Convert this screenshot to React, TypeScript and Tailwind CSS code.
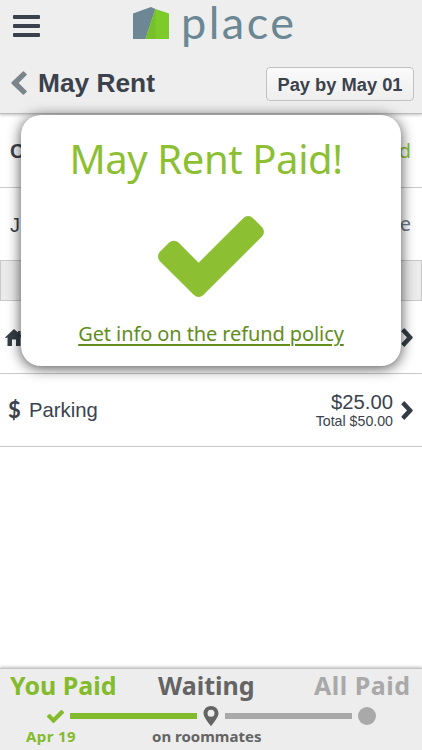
import type { ReactNode } from "react";
import clsx from "clsx";

function CheckMark({ className }: { className?: string }) {
  return (
    <svg viewBox="121 334 1550 1188" preserveAspectRatio="none" fill="currentColor" className={className}>
      <path d="M1671 566q0 40-28 68l-724 724-136 136q-28 28-68 28t-68-28l-136-136-362-362q-28-28-28-68t28-68l136-136q28-28 68-28t68 28l294 295 656-657q28-28 68-28t68 28l136 136q28 28 28 68z" />
    </svg>
  );
}

function ChevronRight() {
  return (
    <svg viewBox="0 0 12 19" className="h-[19px] w-3 shrink-0 text-[#343d46]">
      <path
        d="M3.800.6 11.500 8.800q.5.7 0 1.400L3.800 18.400q-.5.5-1 0L.6 16.300q-.5-.5 0-1L6 9.500.6 3.700q-.5-.5 0-1L2.800.6q.5-.5 1 0z"
        fill="currentColor"
      />
    </svg>
  );
}

function Row({ className, children }: { className?: string; children: ReactNode }) {
  return (
    <div
      className={clsx(
        "flex items-center justify-between border-b border-[#c9c9c9] pr-[9px] pl-[10px] text-xl",
        className ?? "h-[73px]",
      )}
    >
      {children}
    </div>
  );
}

function Header() {
  return (
    <header className="relative h-[114px] shrink-0 border-b border-[#bdbdbd] bg-[#eeeeee] shadow-[0_1px_3px_rgba(0,0,0,0.25)]">
      <div className="flex h-[52px] items-start pl-[13px]">
        <div className="mt-[15px] flex w-[27px] flex-col gap-[5px]">
          <span className="h-1 rounded-[1px] bg-[#39424c]" />
          <span className="h-1 rounded-[1px] bg-[#39424c]" />
          <span className="h-1 rounded-[1px] bg-[#39424c]" />
        </div>
        <div className="ml-[93px] flex items-start">
          <svg viewBox="0 0 36 32" className="mt-[7px] h-8 w-9">
            <path d="M0 6.500 18 0l4.500 2L12.500 32H0z" fill="#6d8795" />
            <path d="M22.500 2 36 6.500V32H12.500z" fill="#7ccb28" />
            <path d="M22.500 2V32h-10z" fill="#76c02c" />
          </svg>
          <span className="ml-3 font-['Lato'] text-[45px] leading-[45px] tracking-[2.5px] text-[#6b8794]">
            place
          </span>
        </div>
      </div>
      <div className="flex h-[62px] items-center pr-2 pl-[11px]">
        <svg viewBox="0 0 16 24" className="h-6 w-4">
          <path
            d="M15.600 3 13 .5q-.6-.6-1.200 0L.6 11.300q-.7.7 0 1.400l11.200 10.800q.6.6 1.200 0l2.600-2.500q.5-.5 0-1L7.700 12l7.900-8q.5-.5 0-1z"
            fill="#7b838b"
          />
        </svg>
        <h1 className="ml-[11px] text-[26.3px] leading-8 font-bold">May Rent</h1>
        <button className="mt-px ml-auto h-[34px] w-[148px] rounded-[4px] border border-[#c2c2c2] bg-gradient-to-b from-[#fafafa] to-[#eeeeee] pt-[2px] text-[18.3px] font-bold whitespace-nowrap">
          Pay by May 01
        </button>
      </div>
    </header>
  );
}

function PaidDialog() {
  return (
    <div className="absolute top-[115px] left-[21px] flex h-[251px] w-[380px] flex-col items-center rounded-[20px] bg-white font-['Noto_Sans'] shadow-[0_2px_14px_rgba(0,0,0,0.7)]">
      <h2 className="mt-[17px] mr-[10px] text-[40px] leading-[54px] tracking-[-0.4px] whitespace-nowrap text-[#8dbf32]">
        May Rent Paid!
      </h2>
      <CheckMark className="mt-[30px] h-[81px] w-[106px] text-[#8dbf32]" />
      <a className="mt-[23px] text-[20px] leading-[28px] tracking-[-0.1px] whitespace-nowrap text-[#638c1e] underline decoration-[1.5px] underline-offset-3">
        Get info on the refund policy
      </a>
    </div>
  );
}

function Progress() {
  return (
    <footer className="relative mt-auto h-[82px] shrink-0 border-t border-[#c4c4c4] bg-[#ededed] font-['Noto_Sans'] font-bold shadow-[0_-1px_3px_rgba(0,0,0,0.25)]">
      <div className="flex h-[37px] items-center pb-[3px] pl-[10px] text-[25px] whitespace-nowrap">
        <span className="w-[148px] text-[#84bb2c]">You Paid</span>
        <span className="w-[156px] text-[#646464]">Waiting</span>
        <span className="tracking-[0.5px] text-[#a9a9a9]">All Paid</span>
      </div>
      <div className="flex h-[20px] items-center pl-[47px]">
        <CheckMark className="h-[13px] w-[17px] text-[#84bb2c]" />
        <span className="ml-[6px] h-[6px] w-[127px] bg-[#84bb2c]" />
        <svg viewBox="0 0 16 22" className="ml-[6px] h-[22px] w-4">
          <path
            d="M8 1C3.800 1 .5 4.200.5 8.200c0 4 4.700 9.100 7.500 13 2.800-3.900 7.500-9 7.500-13C15.500 4.200 12.200 1 8 1zm0 3.700a3.500 3.500 0 1 1 0 7 3.500 3.500 0 0 1 0-7z"
            fill="#646464"
          />
        </svg>
        <span className="ml-[6px] h-[6px] w-[127px] bg-[#a9a9a9]" />
        <span className="ml-[6px] size-[18px] rounded-full bg-[#a9a9a9]" />
      </div>
      <div className="flex h-[20px] items-center pl-[26px] text-[15px] whitespace-nowrap">
        <span className="w-[126px] tracking-[0.4px] text-[#84bb2c]">Apr 19</span>
        <span className="text-[#646464]">on roommates</span>
      </div>
    </footer>
  );
}

export default function App() {
  return (
    <div className="relative flex h-screen flex-col overflow-hidden bg-white font-['Liberation_Sans',sans-serif] text-[#3b424b]">
      <Header />
      <main>
        <Row className="h-[74px]">
          <span className="font-bold">C</span>
          <span className="mr-[2px] font-['Noto_Sans'] text-[#8dbf32]">d</span>
        </Row>
        <Row className="h-[73px]">
          <span className="pt-0.5">J</span>
          <span className="mr-[2px] font-['Noto_Sans'] text-[#737a82]">e</span>
        </Row>
        <div className="-mt-px h-[41px] border border-[#c9c9c9] bg-[#ebebeb]" />
        <Row>
          <svg viewBox="0 0 18 17" className="-ml-[5px] h-[17px] w-[18px]">
            <path d="M9 0l4 3.500V2h2.500v3.700L18 8.500l-1 .8-1.500-1V17H11v-6.500H7V17H2.500V8.300L1 9.300 0 8.500z" fill="#343d46" />
          </svg>
          <ChevronRight />
        </Row>
        <Row>
          <div className="flex items-center">
            <span className="-ml-[2px] w-[19px] font-['Lato'] text-[22px] leading-6 font-bold">$</span>
            <span className="ml-[2px] text-[20.3px]">Parking</span>
          </div>
          <div className="ml-auto flex items-center gap-2">
            <div className="text-right">
              <div className="text-[20.3px] leading-[22px]">$25.00</div>
              <div className="text-[14.2px] leading-4">Total $50.00</div>
            </div>
            <ChevronRight />
          </div>
        </Row>
      </main>
      <PaidDialog />
      <Progress />
    </div>
  );
}
